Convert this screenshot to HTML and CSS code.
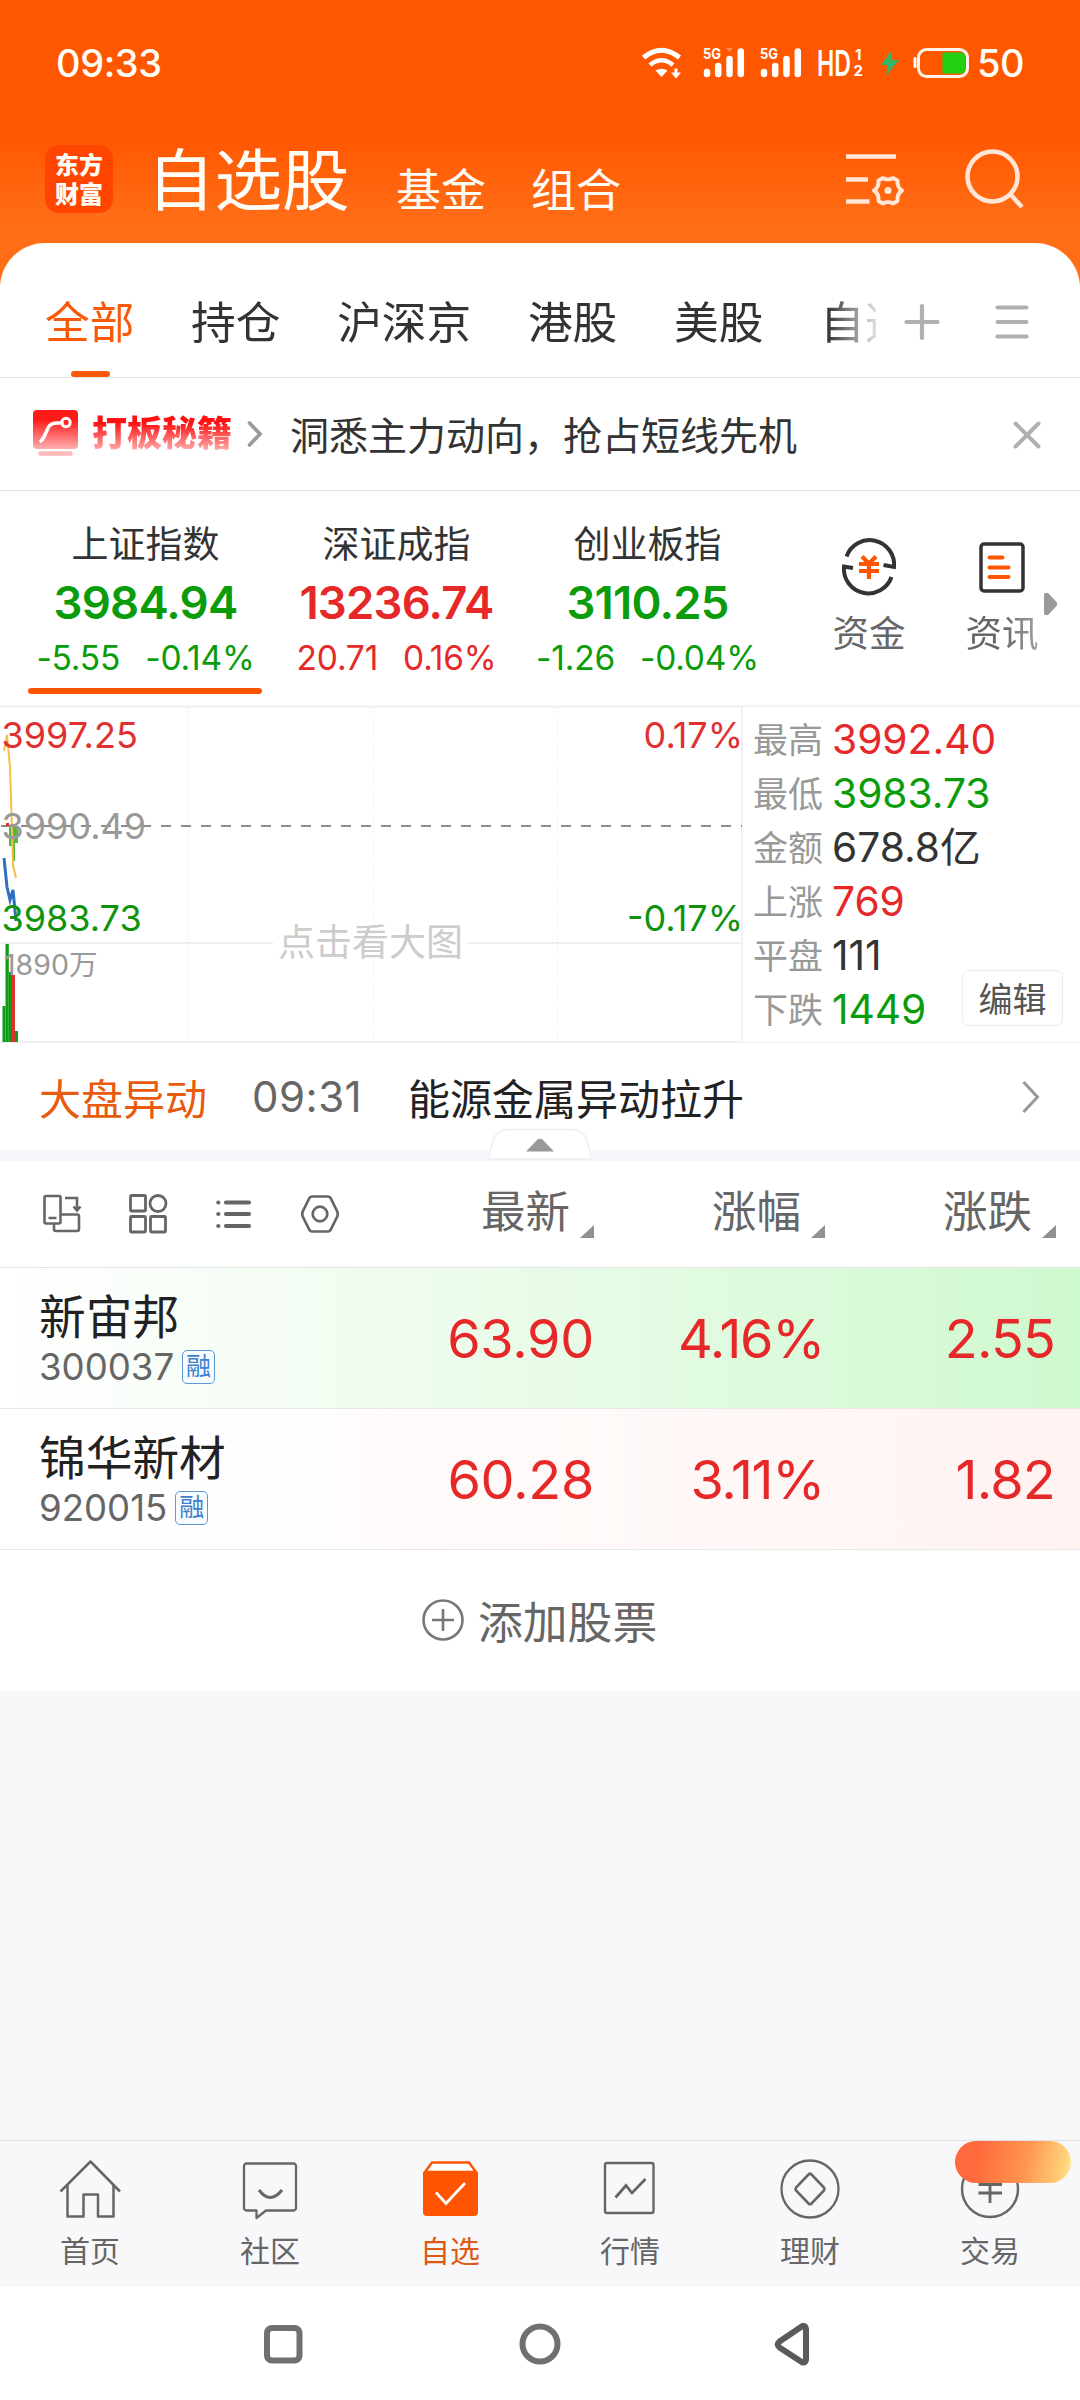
FILE: index.html
```html
<!DOCTYPE html>
<html lang="zh-CN">
<head>
<meta charset="utf-8">
<title>自选股</title>
<link rel="stylesheet" href="styles.css">
</head>
<body>
<div class="phone">
  <header class="top">
    <div class="status">
      <span class="clock">09:33</span>
      <div class="status-icons">
        <svg class="wifi" width="42" height="34" viewBox="0 0 42 34" fill="none" stroke="#fff" stroke-width="5">
          <path d="M2.500 11.500Q20.500 -3 38.500 11.500"/><path d="M9 19Q20.500 9.500 32 19" stroke-width="4.500"/>
          <path d="M14.500 24.500Q20.500 21 26.500 24.500L20.500 31Z" fill="#fff" stroke="none"/>
          <path d="M35 22.500v5" stroke-width="3"/><path d="M30 26.500h10l-5 6Z" fill="#fff" stroke="none"/>
        </svg>
        <svg class="sig" width="42" height="34" viewBox="0 0 42 34">
          <text x="0" y="13" class="tiny" textLength="18" lengthAdjust="spacingAndGlyphs">5G</text>
          <g stroke="#fff" stroke-width="6.500" stroke-linecap="round"><path d="M4 26v2M15.200 20v8M26.500 13v15M37.800 5.500v22.500"/></g>
          <path d="M23 2h7l-3.500 4Z" fill="#fff" opacity=".3"/>
        </svg>
        <svg class="sig" width="42" height="34" viewBox="0 0 42 34">
          <text x="0" y="13" class="tiny" textLength="18" lengthAdjust="spacingAndGlyphs">5G</text>
          <g stroke="#fff" stroke-width="6.500" stroke-linecap="round"><path d="M4 26v2M15.200 20v8M26.500 13v15M37.800 5.500v22.500"/></g>
        </svg>
        <svg class="hd" width="48" height="34" viewBox="0 0 48 34">
          <text x="0" y="29.500" class="hdtext" textLength="34" lengthAdjust="spacingAndGlyphs">HD</text>
          <text x="38" y="13.500" class="tiny">1</text><text x="36.500" y="29.500" class="tiny">2</text>
        </svg>
        <svg class="bolt" width="20" height="28" viewBox="0 0 20 28"><path d="M12 1L1 16h7L6 27 19 11h-7.500Z" fill="#35b566"/></svg>
        <svg class="battery" width="57" height="30" viewBox="0 0 57 30">
          <path d="M3 10.500v8" stroke="#fff" stroke-width="3" stroke-linecap="round"/>
          <rect x="6.500" y="1.500" width="49" height="27" rx="8" fill="none" stroke="#fff2e8" stroke-width="3"/>
          <path d="M30.500 4.500H49a4 4 0 0 1 4 4v13a4 4 0 0 1-4 4H30.500Z" fill="#22d012"/>
        </svg>
      </div>
      <span class="percent">50</span>
    </div>
    <div class="titlebar">
      <div class="logo"><span>东方</span><span>财富</span></div>
      <h1 class="title">自选股</h1>
      <span class="subtitle">基金</span>
      <span class="subtitle">组合</span>
      <svg class="manage" width="62" height="60" viewBox="0 0 62 60" fill="none" stroke="#ffe6d6" stroke-width="4.500">
        <path d="M1 7.500h50M1 30.500h22M1 52.500h23.500"/>
        <path d="M38 29Q43 32 48 29L52.500 31.500Q52 38.500 57 41.500Q52 44.500 52.500 52L48 54.500Q43 51.500 38 54.500L33.500 52Q34 44.500 29 41.500Q34 38.500 33.500 31.500Z" stroke-width="4" stroke-linejoin="round"/>
        <circle cx="43" cy="41.500" r="3.500" fill="#ffe6d6" stroke="none"/>
      </svg>
      <svg class="search" width="60" height="62" viewBox="0 0 60 62" fill="none" stroke="#ffe6d6" stroke-width="4.500">
        <circle cx="27.500" cy="28.500" r="25"/><path d="M45.500 46.500L57 59"/>
      </svg>
    </div>
  </header>

  <main class="sheet">
    <nav class="groups">
      <div class="group-scroll">
        <span class="group active">全部</span><span class="group">持仓</span><span class="group">沪深京</span><span class="group">港股</span><span class="group">美股</span><span class="group">自选</span>
      </div>
      <svg class="plus" width="36" height="38" viewBox="0 0 36 38" stroke="#b0b0b0" stroke-width="4.200" stroke-linecap="round"><path d="M2.500 19h31M18 3v32"/></svg>
      <svg class="menu" width="34" height="36" viewBox="0 0 34 36" stroke="#b0b0b0" stroke-width="4.200" stroke-linecap="round"><path d="M2.500 3.500h29M2.500 18h29M2.500 32.500h29"/></svg>
    </nav>

    <section class="promo">
      <svg class="promo-icon" width="46" height="48" viewBox="0 0 46 48" fill="none">
        <defs><linearGradient id="pg" x1="0" y1="0" x2="0" y2="1"><stop offset=".25" stop-color="#ff1a1a"/><stop offset="1" stop-color="#ffb0b0"/></linearGradient></defs>
        <rect x="0" y="1" width="45" height="39" rx="4" fill="url(#pg)"/>
        <path d="M8 32C16 24 12 14 24 14h5" stroke="#fff" stroke-width="3.500" stroke-linecap="round"/>
        <circle cx="33" cy="13.500" r="4.200" stroke="#fff" stroke-width="3"/>
        <path d="M7.500 44.500h30" stroke="#ffb9b9" stroke-width="4.500" stroke-linecap="round"/>
      </svg>
      <strong class="promo-name">打板秘籍</strong>
      <svg class="promo-arrow" width="16" height="28" viewBox="0 0 16 28" fill="none" stroke="#999" stroke-width="3.600" stroke-linecap="round"><path d="M2.500 3l10.500 11L2.500 25"/></svg>
      <span class="promo-text">洞悉主力动向，抢占短线先机</span>
      <svg class="close" width="28" height="28" viewBox="0 0 28 28" stroke="#b0b0b0" stroke-width="4" stroke-linecap="round"><path d="M2.500 2.500l23 23M25.500 2.500l-23 23"/></svg>
    </section>

    <section class="indices">
      <div class="index down selected"><span class="index-name">上证指数</span><b>3984.94</b><div class="change"><span>-5.55</span><span>-0.14%</span></div></div>
      <div class="index up"><span class="index-name">深证成指</span><b>13236.74</b><div class="change"><span>20.71</span><span>0.16%</span></div></div>
      <div class="index down"><span class="index-name">创业板指</span><b>3110.25</b><div class="change"><span>-1.26</span><span>-0.04%</span></div></div>
      <div class="shortcut fund">
        <svg width="58" height="56" viewBox="0 0 58 56" fill="none" stroke="#333" stroke-width="4">
          <path d="M6.500 17.500A24.500 24.500 0 0 1 54 28L43.500 26"/><path d="M51.500 38A24.500 24.500 0 0 1 4 27.500L13 29"/>
          <path d="M22 17.500l7 7 7-7M19 25h20M19 32h20M29 24v16" stroke="#ff5500" stroke-width="4.200"/>
        </svg>
        <span>资金</span>
      </div>
      <div class="shortcut news">
        <svg width="46" height="56" viewBox="0 0 46 56" fill="none" stroke="#333" stroke-width="3.500">
          <rect x="2" y="5" width="42" height="47" rx="3"/>
          <path d="M10.500 18.500h13M10.500 28.500h19M10.500 38h19" stroke="#ff5500" stroke-width="4" stroke-linecap="round"/>
        </svg>
        <span>资讯</span>
      </div>
      <svg class="more" width="14" height="24" viewBox="0 0 14 24"><path d="M0 2Q3-1 6 3L12.500 10Q14 12 12.500 14L6 21Q3 25 0 22Z" fill="#999"/></svg>
    </section>

    <section class="market">
      <svg class="chart" width="743" height="338" viewBox="0 705 743 338">
        <g stroke="#f0f0f2" stroke-width="2"><path d="M1 706.500H743M1 943H273M467 943H743M1 1042H743M742 706V1042"/></g>
        <g stroke="#e6e6ea" stroke-width="1" stroke-dasharray="1 2"><path d="M188.500 708V1042M373.500 708V1042M557.500 708V1042"/></g>
        <path d="M1 826H742" stroke="#8c8c8c" stroke-width="2" stroke-dasharray="10 10" />
        <g fill="#54b83c"><rect x="9" y="826" width="3" height="20"/><rect x="12" y="826" width="3" height="35"/><rect x="15" y="826" width="3" height="17"/></g>
        <rect x="6" y="823" width="3" height="3" fill="#d8322c"/>
        <path d="M4 751L7 735 10 767 12.300 840 13 865 16 878" fill="none" stroke="#f6bd4a" stroke-width="2"/>
        <path d="M4 858L7 887 10 900 13 890 16 921" fill="none" stroke="#2f6fc0" stroke-width="3"/>
        <g fill="#0f9b16"><rect x="2.500" y="1006" width="3" height="36"/><rect x="5.500" y="944" width="3.300" height="98"/><rect x="8.800" y="972" width="3.200" height="70"/><rect x="15" y="1031" width="3" height="11"/></g>
        <rect x="12" y="975" width="3" height="67" fill="#dd332d"/>
        <text x="1.500" y="747.500" class="c-up">3997.25</text>
        <text x="1.500" y="839" class="c-flat">3990.49</text>
        <text x="1.500" y="930.500" class="c-down">3983.73</text>
        <text x="743" y="747.500" class="c-up" text-anchor="end">0.17%</text>
        <text x="743" y="930.500" class="c-down" text-anchor="end">-0.17%</text>
        <text x="4" y="975" class="c-vol">1890万</text>
        <text x="278" y="956" class="c-hint">点击看大图</text>
      </svg>
      <dl class="stats">
        <dt>最高</dt><dd class="up">3992.40</dd>
        <dt>最低</dt><dd class="down">3983.73</dd>
        <dt>金额</dt><dd>678.8亿</dd>
        <dt>上涨</dt><dd class="up">769</dd>
        <dt>平盘</dt><dd>111</dd>
        <dt>下跌</dt><dd class="down">1449</dd>
      </dl>
      <button class="edit">编辑</button>
    </section>

    <section class="alert">
      <span class="alert-tag">大盘异动</span><span class="alert-time">09:31</span><span class="alert-text">能源金属异动拉升</span>
      <svg class="alert-arrow" width="18" height="34" viewBox="0 0 18 34" fill="none" stroke="#999" stroke-width="3"><path d="M1.500 2L15.500 17 1.500 32"/></svg>
    </section>
    <div class="band">
      <svg class="handle" width="106" height="32" viewBox="0 0 106 32"><path d="M1 31L6 13Q9 1.500 21 1.500H85Q97 1.500 100 13L105 31Z" fill="#fff" stroke="#f0f0f2" stroke-width="1.500"/><path d="M39 23.500L50 12Q53 9.500 56 12L67 23.500Z" fill="#999"/></svg>
    </div>

    <section class="columns">
      <svg width="38" height="40" viewBox="0 0 38 40" fill="none" stroke="#666" stroke-width="2.600">
        <rect x="1.500" y="2" width="16" height="27.500" rx="1.500"/><path d="M5.500 24h8M22 4h12v12M30.500 12.500l3.500 4 3.500-4M18 20.500h16a2 2 0 0 1 2 2V35a2 2 0 0 1-2 2H13a2 2 0 0 1-2-2V30"/>
      </svg>
      <svg width="38" height="40" viewBox="0 0 38 40" fill="none" stroke="#666" stroke-width="2.800">
        <rect x="1.500" y="1.500" width="15" height="15.500" rx="1"/><circle cx="29" cy="9.500" r="8"/><rect x="1.500" y="22.500" width="15" height="15.500" rx="1"/><rect x="21.500" y="22.500" width="15" height="15.500" rx="1"/>
      </svg>
      <svg width="38" height="40" viewBox="0 0 38 40" fill="none" stroke="#666" stroke-width="4.200" stroke-linecap="round"><path d="M3.300 8.500h.01M3.300 20h.01M3.300 32h.01M11 8.500h23M11 20h23M11 32h23"/></svg>
      <svg width="38" height="40" viewBox="0 0 38 40" fill="none" stroke="#666" stroke-width="2.700">
        <path d="M11 2.500H27Q28.500 2.500 29.500 4L36.500 18Q37 20 36.500 22L29.500 36Q28.500 37.500 27 37.500H11Q9.500 37.500 8.500 36L1.500 22Q1 20 1.500 18L8.500 4Q9.500 2.500 11 2.500Z"/><circle cx="19" cy="20" r="7.300"/>
      </svg>
      <span class="col first">最新</span><span class="col">涨幅</span><span class="col">涨跌</span>
    </section>

    <section class="stocks">
      <div class="stock falling">
        <div class="who"><span class="name">新宙邦</span><span class="code">300037<i>融</i></span></div>
        <span class="num">63.90</span><span class="num pct">4.16%</span><span class="num last">2.55</span>
      </div>
      <div class="stock rising">
        <div class="who"><span class="name">锦华新材</span><span class="code">920015<i>融</i></span></div>
        <span class="num">60.28</span><span class="num pct">3.11%</span><span class="num last">1.82</span>
      </div>
    </section>

    <div class="add">
      <svg width="44" height="44" viewBox="0 0 44 44" fill="none" stroke="#777" stroke-width="2.600"><circle cx="22" cy="22" r="19.500"/><path d="M11 22h22M22 11v22"/></svg>
      <span>添加股票</span>
    </div>
  </main>

  <nav class="tabs">
    <div class="tab"><svg width="62" height="66" viewBox="0 0 62 66" fill="none" stroke="#666" stroke-width="2.500"><path d="M1.500 35.500L31.500 5.500 61 35.500M8.500 29V60.500H24.500V38.500H39V60.500H54.500V29" stroke-linejoin="round"/></svg><span>首页</span></div>
    <div class="tab"><svg width="62" height="66" viewBox="0 0 62 66" fill="none" stroke="#666" stroke-width="2.300"><path d="M7.500 7.500H54.500A2.500 2.500 0 0 1 57 10V52A2.500 2.500 0 0 1 54.500 54.500H27L17.500 62V54.500H7.500A2.500 2.500 0 0 1 5 52V10A2.500 2.500 0 0 1 7.500 7.500Z" stroke-linejoin="round"/><path d="M20 34Q31 49 43 34" stroke-width="3"/></svg><span>社区</span></div>
    <div class="tab current"><svg width="62" height="66" viewBox="0 0 62 66" fill="none"><path d="M13 6.500H50L57 16H6Z" fill="#fff" stroke="#ff5500" stroke-width="2.500"/><path d="M4 16H59V56a4 4 0 0 1-4 4H8a4 4 0 0 1-4-4Z" fill="#ff5500"/><path d="M17 36.500L27 47.500 46 27" stroke="#fff" stroke-width="2.800"/></svg><span>自选</span></div>
    <div class="tab"><svg width="62" height="66" viewBox="0 0 62 66" fill="none" stroke="#666" stroke-width="2.400"><rect x="6" y="7" width="48.500" height="50" rx="2"/><path d="M16.500 41.500L27 29.500 33 37 46.500 23" stroke-width="2.800"/></svg><span>行情</span></div>
    <div class="tab"><svg width="62" height="66" viewBox="0 0 62 66" fill="none" stroke="#666" stroke-width="2.300"><circle cx="31" cy="33" r="28.500"/><path d="M29.500 18.500Q31 17 32.500 18.500L45 31.500Q46 33 45 34.500L32.500 47.500Q31 49 29.500 47.500L17 34.500Q16 33 17 31.500Z" stroke-width="2.600"/></svg><span>理财</span></div>
    <div class="tab"><svg width="62" height="66" viewBox="0 0 62 66" fill="none" stroke="#666" stroke-width="2.400"><circle cx="31" cy="33" r="28"/><path d="M21 18L31 28 41 18M19.500 28.500H43M19.500 37H43M31 28V47" stroke-width="2.800"/></svg><span>交易</span><i class="bubble"></i></div>
  </nav>
  <footer class="sysnav">
    <svg width="44" height="46" viewBox="0 0 44 46" fill="none" stroke="#707070" stroke-width="6"><rect x="6" y="7" width="32.500" height="32.500" rx="5"/></svg>
    <svg width="44" height="46" viewBox="0 0 44 46" fill="none" stroke="#707070" stroke-width="6"><circle cx="22" cy="23" r="17.500"/></svg>
    <svg width="44" height="46" viewBox="5.500 0 44 46" fill="none" stroke="#5a5a5a" stroke-width="6" stroke-linejoin="round"><path d="M33 5Q36.500 4.500 36.500 8V38.500Q36.500 42 33 41.500L10 26.500Q6.500 23.500 10 20.500Z"/></svg>
  </footer>
</div>
</body>
</html>
```

FILE: styles.css
```css
* { box-sizing: border-box; }
body, h1, dl, dd { margin: 0; }
body { width: 1080px; font-family: Inter, "Noto Sans CJK SC", sans-serif; color: #333; }
i { font-style: normal; }
svg { display: block; flex: none; overflow: visible; }
span, b, strong, dt, dd { white-space: nowrap; }
.phone { width: 1080px; height: 2400px; display: flex; flex-direction: column; background: #f7f8fa; overflow: hidden; }
.up { color: #e62828; }
.down { color: #0a9c0a; }

.top { height: 288px; margin-bottom: -45px; background: linear-gradient(#ff5700 0, #ff5700 135px, #ff6c15 215px, #ff7019 288px); color: #fffdf8; }
.status { height: 125px; padding-left: 56px; display: flex; align-items: center; line-height: 46px; font-size: 38px; }
.clock { width: 585px; letter-spacing: -.4px; font-weight: 500; }
.status-icons { display: flex; align-items: center; }
.sig { margin-left: 20px; }
.wifi + .sig { margin-left: 20px; }
.sig + .sig { margin-left: 15px; }
.hd { margin-left: 15px; }
.bolt { margin-left: 15px; }
.battery { margin-left: 12px; }
.percent { margin-left: 8px; font-weight: 500; letter-spacing: -.4px; }
.tiny { font: 700 15px Inter, sans-serif; fill: #fff; }
.hdtext { font: 600 36px Inter, sans-serif; fill: #fff; }

.titlebar { height: 118px; padding-left: 45px; display: flex; align-items: flex-start; padding-top: 20px; }
.logo { width: 68px; height: 68px; border-radius: 14px; background: #ff4500; display: flex; flex-direction: column; align-items: center; justify-content: center; padding-bottom: 2px; font: 900 24px/29px "Noto Sans CJK SC", sans-serif; }
.title { margin: 1px 0 0 34px; width: 249px; font-size: 67.500px; line-height: 70px; font-weight: 400; }
.subtitle { width: 135px; margin-top: 19px; font-size: 45px; line-height: 54px; }
.manage { margin: 4px 0 0 179px; }
.search { margin: 3px 0 0 58px; }

.sheet { background: #fff; border-radius: 45px 45px 0 0; }
.groups { height: 135px; border-bottom: 1px solid #e2e2e2; display: flex; align-items: center; padding: 24px 0 0 45px; }
.group-scroll { width: 831px; margin-top: -24px; height: 134px; padding-top: 25px; display: flex; gap: 56.700px; overflow: hidden; font-size: 44.700px; line-height: 110px; -webkit-mask-image: linear-gradient(90deg, #000 782px, transparent 840px); mask-image: linear-gradient(90deg, #000 782px, transparent 840px); }
.group.active { color: #f95a0a; position: relative; }
.group.active::after { content: ""; position: absolute; left: 26px; top: 103px; width: 39px; height: 6px; border-radius: 3px; background: #f95a0a; }
.plus { margin-left: 28px; }
.menu { margin-left: 55px; }

.promo { height: 113px; border-bottom: 1px solid #e2e2e2; display: flex; align-items: center; padding-left: 33px; }
.promo-icon { margin-top: -3px; }
.promo-name { margin: -2px 0 0 13px; width: 155px; font-size: 35px; line-height: 40px; font-weight: 900; background: linear-gradient(#f11 25%, #ffb0b0 95%); -webkit-background-clip: text; background-clip: text; color: transparent; }
.promo-text { margin: -3px 0 0 27px; width: 723px; font-size: 39px; }
.close { margin-top: 2px; }

.indices { height: 214px; padding: 30px 0 0 20px; display: flex; }
.index { width: 251px; height: 174px; display: flex; flex-direction: column; align-items: center; position: relative; }
.index-name { font-size: 37px; line-height: 48px; color: #333; }
.index b { font-size: 45.500px; font-weight: 600; line-height: 68px; letter-spacing: -.8px; }
.change { display: flex; gap: 25px; font-size: 33.500px; line-height: 44px; margin-top: -1px; letter-spacing: -.2px; }
.selected::after { content: ""; position: absolute; left: 8px; bottom: 1px; width: 234px; height: 6px; border-radius: 3px; background: #f50; }
.shortcut { width: 74px; margin-top: 18px; display: flex; flex-direction: column; align-items: center; color: #666; font-size: 36.500px; line-height: 78px; }
.fund { margin-left: 59px; }
.news { margin-left: 59px; }
.news span { -webkit-mask-image: linear-gradient(90deg, #000 50%, rgba(0,0,0,.6)); mask-image: linear-gradient(90deg, #000 50%, rgba(0,0,0,.6)); }
.more { margin: 71px 0 0 5px; }

.market { height: 338px; display: flex; position: relative; border-bottom: 1px solid #f0f0f2; }
.chart { font-size: 36px; }
.c-up { fill: #e03030; }
.c-down { fill: #0f930f; }
.c-flat { fill: #999; }
.c-vol { fill: #999; font-size: 28.500px; }
.c-hint { fill: #ccc; font-size: 37px; }
.stats { flex: 1; padding: 6px 0 0 10px; border-top: 2px solid #f3f3f5; display: grid; grid-template-columns: 79px 1fr; grid-auto-rows: 54px; line-height: 54px; font-size: 40.700px; }
.stats dt { font-size: 35px; color: #999; }
.edit { position: absolute; left: 962px; top: 265px; width: 101px; height: 56px; border: 1.500px solid #ececee; border-radius: 7px; background: #fff; padding: 0 0 1px; font: 34px Inter, "Noto Sans CJK SC", sans-serif; color: #555; }

.alert { height: 107px; padding: 0 0 0 39px; display: flex; align-items: center; font-size: 42px; }
.alert-tag { width: 213px; color: #e85a0c; }
.alert-time { width: 156px; color: #666; letter-spacing: .5px; }
.alert-text { width: 614px; color: #222; font-size: 42px; }
.band { height: 11px; background: #f5f7fa; position: relative; }
.handle { position: absolute; left: 487px; top: -22px; }

.columns { height: 107px; border-bottom: 1px solid #e2e2e2; display: flex; align-items: center; padding-left: 43px; gap: 48px; color: #666; font-size: 44.500px; }
.col { width: 113px; height: 54px; line-height: 54px; margin: -4px 0 0 70px; position: relative; }
.col.first { margin-left: 94px; }
.col::after { content: ""; position: absolute; right: 0; bottom: 1px; border-left: 14px solid transparent; border-bottom: 13px solid #909095; }

.stock { height: 141px; border-bottom: 1px solid #e8e8e8; display: flex; padding-left: 39px; }
.falling { background: linear-gradient(90deg, #fff, #f1fcf0 34%, #e3fbe3 60%, #cff9cf); }
.rising { background: linear-gradient(90deg, #fff 10%, #fffafa 45%, #fff3f2); }
.who { flex: none; width: 325px; display: flex; flex-direction: column; color: #222; }
.name { font-size: 46.700px; line-height: 60px; margin-top: 19px; }
.code { font-size: 36.600px; line-height: 40px; color: #666; display: flex; align-items: center; }
.code i { margin-left: 8px; width: 33px; height: 34px; border: 1.500px solid #5c98d8; border-radius: 5px; background: #f8fbff; color: #3d80cc; font-size: 25px; line-height: 31px; text-align: center; }
.num { width: 230px; text-align: right; font-size: 54px; line-height: 142px; color: #e62828; letter-spacing: -.3px; }
.num.pct { letter-spacing: -1.300px; }
.num.last { width: 231px; letter-spacing: -.8px; }

.add { height: 141px; display: flex; align-items: center; gap: 13px; padding: 0 0 2px 421px; font-size: 44.800px; color: #666; }

.tabs { margin-top: auto; height: 147px; border-top: 1px solid #dfe1e4; background: #f8f8fb; display: flex; }
.tab { width: 180px; padding-top: 15px; display: flex; flex-direction: column; align-items: center; font-size: 30px; line-height: 58px; color: #666; position: relative; }
.tab svg { margin-left: -1px; }
.current { color: #dc5a14; }
.bubble { position: absolute; left: 55px; top: 0; width: 116px; height: 42px; border-radius: 21px; background: linear-gradient(100deg, #ff6a3c 20%, #ff9550 60%, #ffd27a 92%, #ffee99); }
.sysnav { height: 113px; background: #fff; display: flex; align-items: center; justify-content: center; gap: 213px; }
```
